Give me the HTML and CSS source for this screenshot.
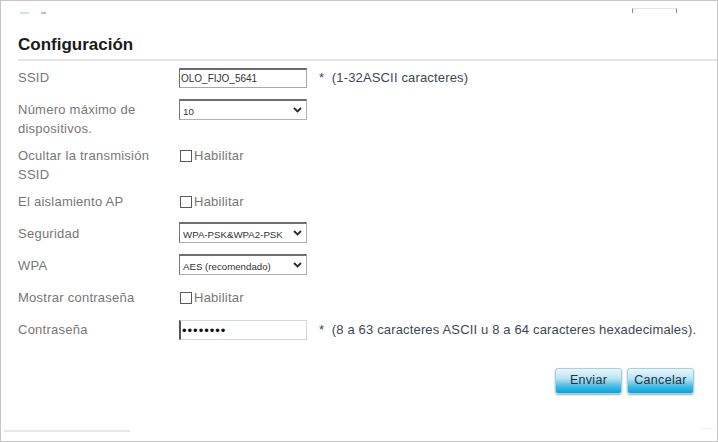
FILE: index.html
```html
<!DOCTYPE html>
<html lang="es">
<head>
<meta charset="utf-8">
<title>Configuración</title>
<link rel="stylesheet" href="styles.css">
</head>
<body>
<div class="page">
  <div class="topbar">
    <div class="frags"><span class="frag frag-blue"></span><span class="frag frag-red"></span></div>
    <div class="topbtn"></div>
  </div>
  <h1 class="title">Configuración</h1>
  <div class="sep"></div>

  <form class="form">
    <div class="row">
      <div class="label">SSID</div>
      <div class="ctrl">
        <input class="field field-text" type="text" value="OLO_FIJO_5641">
        <span class="hint">*&nbsp; (1-32ASCII caracteres)</span>
      </div>
    </div>
    <div class="row">
      <div class="label">Número máximo de<br>dispositivos.</div>
      <div class="ctrl">
        <div class="selwrap sel-a">
          <select class="field field-select"><option>10</option></select>
          <svg class="chev" width="9" height="6" viewBox="0 0 9 6"><path d="M1 1 L4.5 4.5 L8 1" fill="none" stroke="#2a2a2a" stroke-width="1.8"/></svg>
        </div>
      </div>
    </div>
    <div class="row">
      <div class="label">Ocultar la transmisión<br>SSID</div>
      <div class="ctrl">
        <label class="check"><input type="checkbox" class="box"><span>Habilitar</span></label>
      </div>
    </div>
    <div class="row">
      <div class="label">El aislamiento AP</div>
      <div class="ctrl">
        <label class="check"><input type="checkbox" class="box"><span>Habilitar</span></label>
      </div>
    </div>
    <div class="row">
      <div class="label">Seguridad</div>
      <div class="ctrl">
        <div class="selwrap sel-b">
          <select class="field field-select"><option>WPA-PSK&amp;WPA2-PSK</option></select>
          <svg class="chev" width="9" height="6" viewBox="0 0 9 6"><path d="M1 1 L4.5 4.5 L8 1" fill="none" stroke="#2a2a2a" stroke-width="1.8"/></svg>
        </div>
      </div>
    </div>
    <div class="row">
      <div class="label">WPA</div>
      <div class="ctrl">
        <div class="selwrap sel-b">
          <select class="field field-select"><option>AES (recomendado)</option></select>
          <svg class="chev" width="9" height="6" viewBox="0 0 9 6"><path d="M1 1 L4.5 4.5 L8 1" fill="none" stroke="#2a2a2a" stroke-width="1.8"/></svg>
        </div>
      </div>
    </div>
    <div class="row">
      <div class="label">Mostrar contraseña</div>
      <div class="ctrl">
        <label class="check"><input type="checkbox" class="box"><span>Habilitar</span></label>
      </div>
    </div>
    <div class="row">
      <div class="label">Contraseña</div>
      <div class="ctrl">
        <input class="field field-pass" type="password" value="12345678">
        <span class="hint">*&nbsp; (8 a 63 caracteres ASCII u 8 a 64 caracteres hexadecimales).</span>
      </div>
    </div>

    <div class="actions">
      <button type="button" class="btn">Enviar</button>
      <button type="button" class="btn">Cancelar</button>
    </div>
  </form>

  <div class="foot">
    <span class="foot-line"></span>
    <span class="foot-tick"></span>
  </div>
</div>
</body>
</html>
```
FILE: styles.css
```css
* { box-sizing: border-box; }

html, body {
  margin: 0;
  padding: 0;
  background: #ffffff;
}

body {
  font-family: "Liberation Sans", Arial, sans-serif;
  width: 718px;
  height: 442px;
  overflow: hidden;
}

.page {
  width: 718px;
  height: 442px;
  border: 1px solid #c6c6c6;
  display: flex;
  flex-direction: column;
}

.topbar {
  height: 34px;
  display: flex;
  justify-content: space-between;
  align-items: flex-start;
  padding: 7px 40px 0 19px;
}

.frags {
  display: flex;
  gap: 12px;
  padding-top: 4px;
}

.frag {
  display: block;
  height: 2px;
}

.frag-blue { width: 9px; background: #cfe2f2; }
.frag-red { width: 5px; background: #d8b4b4; }

.topbtn {
  width: 45px;
  height: 5px;
  border-top: 1px solid #e2e2e2;
  border-left: 1px solid #8a8a8a;
  border-right: 1px solid #8a8a8a;
}

.title {
  margin: 0 0 4px 17px;
  font-size: 17px;
  line-height: 20px;
  font-weight: bold;
  color: #1b1b1b;
}

.sep {
  height: 2px;
  margin-left: 17px;
  background: #e4e4e4;
}

.form {
  display: flex;
  flex-direction: column;
}

.row {
  display: grid;
  grid-template-columns: 161px 1fr;
  height: auto;
  min-height: 32px;
  padding: 6px 0 1px 17px;
}

.label {
  padding-top: 1px;
  font-size: 13px;
  letter-spacing: 0.25px;
  line-height: 19px;
  color: #777777;
}

.ctrl {
  display: flex;
  align-items: flex-start;
  gap: 12px;
}

.hint {
  padding-top: 1px;
  font-size: 13px;
  letter-spacing: 0.16px;
  line-height: 19px;
  color: #3d4752;
  white-space: nowrap;
}

.field {
  font-family: "Liberation Sans", Arial, sans-serif;
  margin: 0;
  outline: none;
  background: #ffffff;
  color: #333333;
}

.field-text {
  width: 128px;
  height: 20px;
  margin-top: 1px;
  padding: 0 0 0 1px;
  font-size: 10px;
  border: 1px solid #a8a8a8;
  border-top: 2px solid #6a6a6a;
  border-left-color: #707070;
}

.field-pass {
  width: 128px;
  height: 20px;
  margin-top: 1px;
  padding: 0 0 0 1px;
  font-size: 13px;
  letter-spacing: 1px;
  color: #111111;
  border: 1px solid #d6d6d6;
  border-left: 2px solid #555555;
}

.selwrap {
  position: relative;
  width: 128px;
  height: 21px;
}

.sel-a { margin-top: 0; }
.sel-b { margin-top: -1px; }

.field-select {
  -webkit-appearance: none;
  appearance: none;
  width: 128px;
  height: 21px;
  padding: 2px 0 0 3px;
  font-size: 9.7px;
  border: 1px solid #b0b0b0;
  border-top: 2px solid #6e6e6e;
  border-left-color: #777777;
  border-radius: 0;
}

.chev {
  position: absolute;
  right: 5px;
  top: 8px;
  pointer-events: none;
}

.check {
  display: flex;
  align-items: flex-start;
  gap: 2px;
  padding-top: 1px;
  font-size: 13px;
  letter-spacing: 0.25px;
  line-height: 19px;
  color: #777777;
}

.box {
  -webkit-appearance: none;
  appearance: none;
  width: 12px;
  height: 12px;
  margin: 4px 0 0 1px;
  border: 1px solid #5a5a5a;
  border-radius: 0;
  background: #ffffff;
}

.actions {
  display: flex;
  justify-content: flex-end;
  gap: 5px;
  margin-top: 23px;
  padding-right: 23px;
}

.btn {
  width: 67px;
  height: 26px;
  padding: 0 0 2px 0;
  font-family: "Liberation Sans", Arial, sans-serif;
  font-size: 12.5px;
  letter-spacing: 0.3px;
  color: #25333d;
  border: 1px solid #9fd2e6;
  border-radius: 3px;
  background: linear-gradient(to bottom, #eaf6fb 0%, #b8e3f3 40%, #4dbde6 70%, #00a5dc 100%);
  box-shadow: 0 1px 2px rgba(0, 0, 0, 0.35);
}

.foot {
  margin-top: auto;
  display: flex;
  justify-content: space-between;
  align-items: flex-start;
  padding: 0 4px 9px 3px;
}

.foot-line {
  display: block;
  width: 126px;
  height: 2px;
  background: #e8e8e8;
}

.foot-tick {
  display: block;
  width: 12px;
  height: 1px;
  margin-top: -2px;
  background: #f0f0f0;
}
```
